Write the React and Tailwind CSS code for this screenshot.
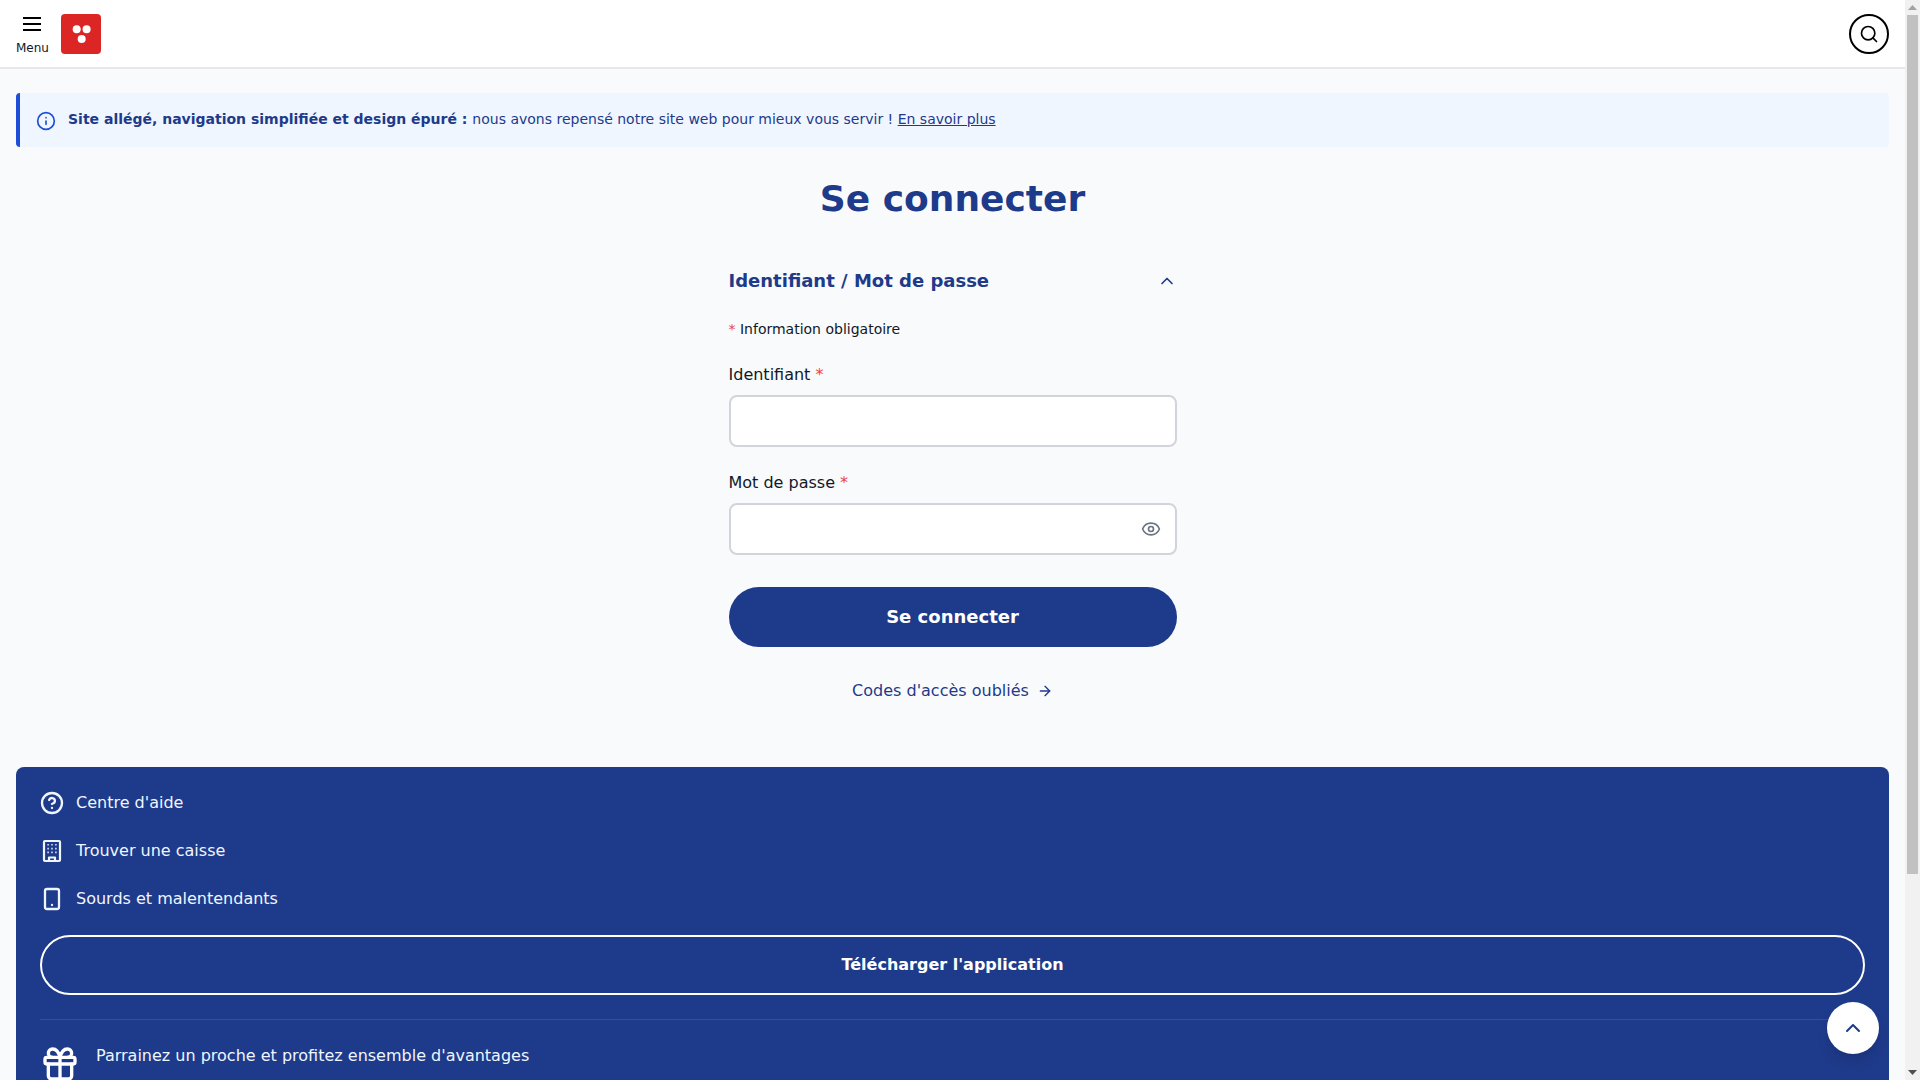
import React from "react";
import { Search, Info, ChevronUp, Eye, ArrowRight, CircleHelp, Smartphone, Gift } from "lucide-react";

function FooterLink({ icon, children }) {
  return (
    <a className="flex items-center gap-3 h-6 text-base text-[#eff6ff]">
      <span className="w-[24px] flex justify-center">{icon}</span>
      <span>{children}</span>
    </a>
  );
}

function BuildingIcon() {
  return (
    <svg width="24" height="24" viewBox="0 0 24 24" fill="none" stroke="currentColor" strokeWidth="2.2" strokeLinecap="round" strokeLinejoin="round">
      <rect x="4" y="2" width="16" height="20" rx="1" />
      <path d="M9 22v-3.5h6V22" />
      <g strokeWidth="1.6" strokeLinecap="butt">
        <path d="M7.4 5.8h1.4M11.3 5.8h1.4M15.2 5.8h1.4" />
        <path d="M7.4 9.6h1.4M11.3 9.6h1.4M15.2 9.6h1.4" />
        <path d="M7.4 13.4h1.4M11.3 13.4h1.4M15.2 13.4h1.4" />
      </g>
    </svg>
  );
}

export default function App() {
  return (
    <div className="h-screen flex overflow-hidden bg-[#f9fafb] text-[#111827] font-['DejaVu_Sans',sans-serif]">
      <div className="relative flex-1 min-w-0 overflow-hidden">
        <header className="h-[69px] bg-white border-b-2 border-[#e5e7eb] flex items-center justify-between px-4">
          <div className="flex items-center gap-3">
            <button className="flex flex-col items-center">
              <svg width="24" height="24" viewBox="0 0 24 24" stroke="black" strokeWidth="2" fill="none">
                <path d="M3 6h18M3 12h18M3 18h18" />
              </svg>
              <span className="text-xs leading-4 mt-1">Menu</span>
            </button>
            <div className="w-10 h-10 bg-[#dc2626] rounded-sm flex items-center justify-center">
              <svg width="20" height="20" viewBox="0 0 20 20" fill="white">
                <circle cx="5.7" cy="5.2" r="4" />
                <circle cx="15.6" cy="5.2" r="4" />
                <circle cx="10.7" cy="15" r="4" />
              </svg>
            </div>
          </div>
          <button className="w-10 h-10 rounded-full border-2 border-black flex items-center justify-center">
            <Search size={20} strokeWidth={2} className="text-black" />
          </button>
        </header>

        <main className="px-4 pt-6">
          <div className="h-[54px] bg-[#eff6ff] border-l-4 border-[#1d4ed8] rounded-sm flex items-center pl-4 text-sm text-[#1e3a8a]">
            <Info size={20} strokeWidth={2} className="text-[#1d4ed8] mr-3 mt-0.5 shrink-0" />
            <p className="pb-0.5">
              <strong className="font-bold">Site allégé, navigation simplifiée et design épuré : </strong>
              nous avons repensé notre site web pour mieux vous servir ! <a className="underline">En savoir plus</a>
            </p>
          </div>

          <h1 className="mt-8 text-4xl leading-10 font-bold text-center text-[#1e3a8a]">Se connecter</h1>

          <section className="w-[448px] mx-auto mt-12">
            <div className="flex items-center justify-between h-7">
              <h2 className="text-lg leading-7 font-bold text-[#1e3a8a]">Identifiant / Mot de passe</h2>
              <ChevronUp size={20} strokeWidth={2} className="text-[#1e3a8a]" />
            </div>
            <p className="mt-6 text-sm leading-5"><span className="text-[#ef4444]">*</span> Information obligatoire</p>

            <label className="block mt-6 text-base leading-6">Identifiant <span className="text-[#ef4444]">*</span></label>
            <div className="mt-2 h-[52px] bg-white border-2 border-[#d1d5db] rounded-lg" />

            <label className="block mt-6 text-base leading-6">Mot de passe <span className="text-[#ef4444]">*</span></label>
            <div className="mt-2 h-[52px] bg-white border-2 border-[#d1d5db] rounded-lg flex items-center justify-end pr-[14px]">
              <Eye size={20} strokeWidth={2} className="text-[#6b7280]" />
            </div>

            <button className="mt-8 w-full h-[60px] rounded-full bg-[#1e3a8a] text-white font-bold text-lg">Se connecter</button>

            <a className="mt-8 flex items-center justify-center gap-2 text-base leading-6 text-[#1e3a8a]">
              Codes d'accès oubliés <ArrowRight size={16} strokeWidth={2} />
            </a>
          </section>

          <footer className="mt-16 bg-[#1e3a8a] rounded-t-lg px-6 pt-6 text-white">
            <div className="flex flex-col gap-6">
              <FooterLink icon={<CircleHelp size={24} strokeWidth={2.3} />}>Centre d'aide</FooterLink>
              <FooterLink icon={<BuildingIcon />}>Trouver une caisse</FooterLink>
              <FooterLink icon={<Smartphone size={24} strokeWidth={2.3} />}>Sourds et malentendants</FooterLink>
            </div>
            <button className="mt-6 w-full h-[60px] rounded-full border-2 border-white font-bold text-base">Télécharger l'application</button>
            <div className="mt-6 border-t border-[#1d4ed8] pt-6 flex items-start gap-4">
              <Gift size={40} strokeWidth={2} className="shrink-0" />
              <p className="text-base leading-6 text-[#eff6ff]">Parrainez un proche et profitez ensemble d'avantages</p>
            </div>
          </footer>
        </main>

        <button className="absolute right-[26px] bottom-[26px] w-[52px] h-[52px] rounded-full bg-white text-[#1e3a8a] flex items-center justify-center shadow-lg">
          <ChevronUp size={24} strokeWidth={2} />
        </button>
      </div>

      <aside className="w-[15px] shrink-0 bg-[#f1f1f1] flex flex-col">
        <div className="h-[15px] flex items-center justify-center">
          <svg width="9" height="5" viewBox="0 0 9 5" fill="#a3a3a3"><path d="M4.5 0L9 5H0z" /></svg>
        </div>
        <div className="h-[859px] mx-[2px] bg-[#c1c1c1]" />
        <div className="flex-1" />
        <div className="h-[15px] flex items-center justify-center">
          <svg width="9" height="5" viewBox="0 0 9 5" fill="#505050"><path d="M0 0h9L4.5 5z" /></svg>
        </div>
      </aside>
    </div>
  );
}
